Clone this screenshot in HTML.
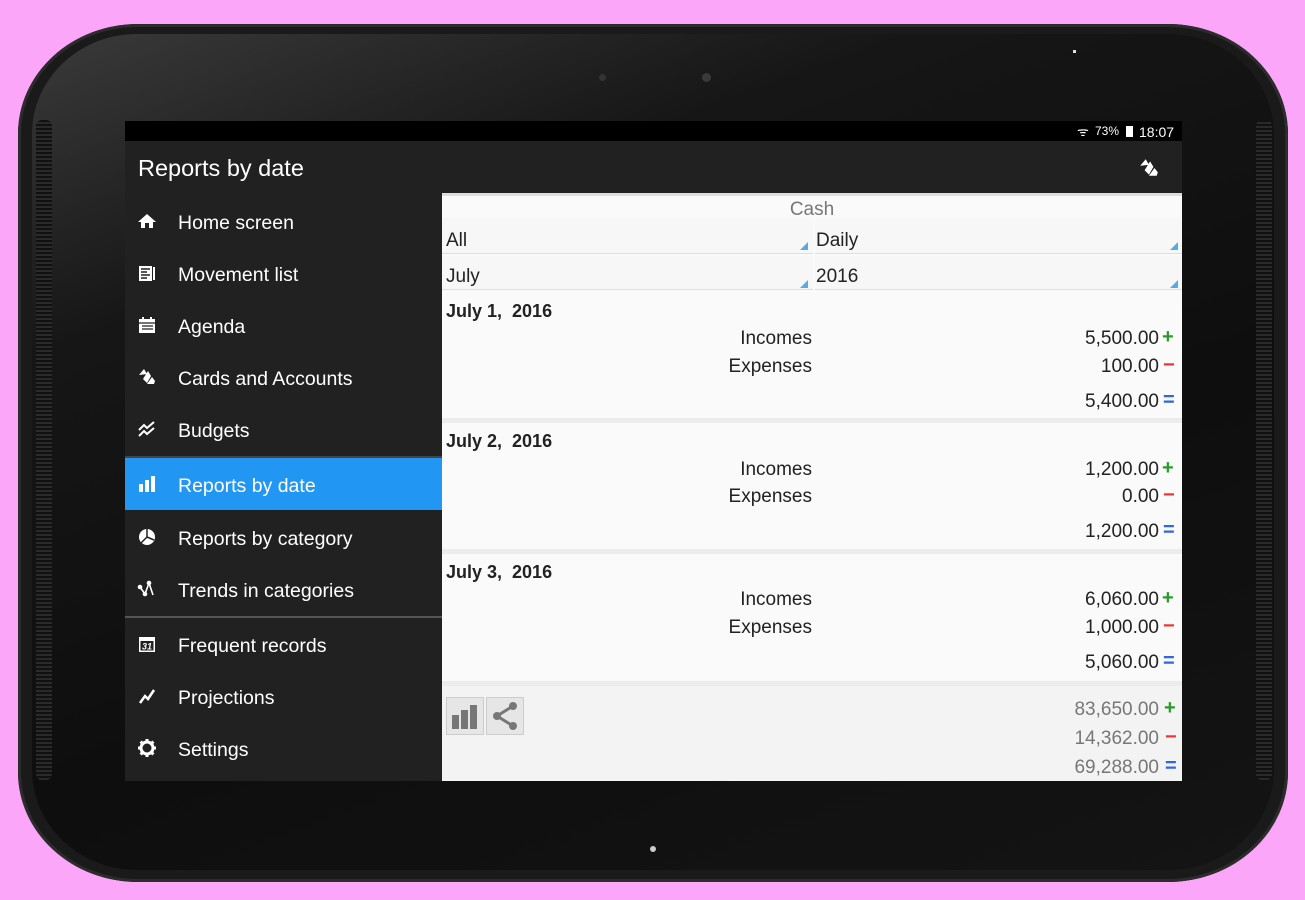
<!DOCTYPE html>
<html><head><meta charset="utf-8"><style>
*{margin:0;padding:0;box-sizing:border-box}
body{width:1305px;height:900px;background:#fba6f8;position:relative;overflow:hidden;font-family:"Liberation Sans","DejaVu Sans",sans-serif}
.a{position:absolute}
.tab{left:18px;top:24px;width:1270px;height:858px;border-radius:120px/110px;background:#1a1a1a;box-shadow:inset 0 0 0 3px #2c2c2c}
.bez{left:32px;top:34px;width:1242px;height:836px;border-radius:105px/100px;background:linear-gradient(160deg,#3a3a3a 0%,#161616 25%,#0e0e0e 60%,#141414 100%)}
.grill{width:16px;height:660px;top:120px;background:repeating-linear-gradient(0deg,#2a2a2a 0 2px,#111 2px 4px);border-radius:6px}
.scr{left:125px;top:121px;width:1057px;height:660px;background:#f7f7f7;overflow:hidden}
.sb{left:0;top:0;width:1057px;height:20px;background:#000;color:#fff;font-size:13px}
.ab{left:0;top:20px;width:1057px;height:52px;background:#212121;color:#fff;font-size:23px}
.dr{left:0;top:72px;width:317px;height:588px;background:#212121;color:#fff;font-size:19.5px}
.it{position:absolute;left:0;width:317px;height:52px}
.it span{position:absolute;left:53px;top:50%;transform:translateY(-40%)}
.it i{position:absolute;left:12px;top:50%;transform:translateY(-50%);width:20px;height:20px;display:block}
.ct{left:317px;top:72px;width:740px;height:588px;background:#fafafa;color:#222;font-size:19px}
.t{position:absolute;white-space:nowrap;line-height:1}
.r{text-align:right}
.sg{position:absolute;font-weight:bold;font-size:20px;line-height:1}
</style></head><body>
<div class="a tab"></div>
<div class="a bez"></div>
<div class="a grill" style="left:36px"></div>
<div class="a grill" style="left:1256px"></div>
<div class="a" style="left:599px;top:74px;width:7px;height:7px;border-radius:50%;background:#333"></div>
<div class="a" style="left:702px;top:73px;width:9px;height:9px;border-radius:50%;background:#3a3a3a"></div>
<div class="a" style="left:1073px;top:50px;width:3px;height:3px;background:#ddd"></div>
<div class="a" style="left:650px;top:846px;width:6px;height:6px;border-radius:50%;background:#ccc"></div>
<div class="a scr">
 <div class="a sb"><span class="t" style="left:952px;top:4px">ᯤ</span><span class="t" style="left:970px;top:4px;font-size:12px">73%</span><span class="a" style="left:1001px;top:5px;width:7px;height:11px;background:#fff"></span><span class="t" style="left:1014px;top:4px;font-size:14px">18:07</span></div>
 <div class="a ab"><span class="t" style="left:13px;top:16px;font-size:23.5px">Reports by date</span>
  <svg class="a" style="left:1013px;top:16px" width="22" height="22" viewBox="0 0 20 20"><path d="M2 8 L7 2 L10 7 Z M6 12 L11 4 L14 9 L10 16 Z M10 17 L15 10 L18 14 L17 17 Z" fill="#fff"/></svg></div>
 <div class="a dr">
  <div class="it" style="top:2px"><i><svg width="20" height="20"><path d="M10 3 L1 11 L4 11 L4 17 L8 17 L8 12 L12 12 L12 17 L16 17 L16 11 L19 11 Z" fill="#fff"/></svg></i><span>Home screen</span></div>
  <div class="it" style="top:54px"><i><svg width="20" height="20"><rect x="2" y="3" width="13" height="15" fill="#fff"/><path d="M4 6h9M4 9h6M4 12h9M4 15h6" stroke="#212121" stroke-width="1.5"/><rect x="16" y="4" width="2" height="13" fill="#fff"/></svg></i><span>Movement list</span></div>
  <div class="it" style="top:106px"><i><svg width="20" height="20"><rect x="2" y="4" width="16" height="14" fill="#fff"/><path d="M2 8h16M5 11h11M5 14h11" stroke="#212121" stroke-width="1.2"/><rect x="5" y="2" width="2" height="4" fill="#fff"/><rect x="13" y="2" width="2" height="4" fill="#fff"/></svg></i><span>Agenda</span></div>
  <div class="it" style="top:158px"><i><svg width="20" height="20" viewBox="0 0 20 20"><path d="M2 8 L7 2 L10 7 Z M6 12 L11 4 L14 9 L10 16 Z M10 17 L15 10 L18 14 L17 17 Z" fill="#fff"/></svg></i><span>Cards and Accounts</span></div>
  <div class="it" style="top:210px"><i><svg width="20" height="20"><path d="M2 11 L7 6 L10 9 L17 3 M2 17 L7 12 L10 15 L17 9" stroke="#fff" stroke-width="2" fill="none"/></svg></i><span>Budgets</span></div>
  <div class="a" style="left:0;top:263px;width:317px;height:2px;background:#444"></div>
  <div class="it" style="top:265px;background:#2196f3;height:52px"><i><svg width="20" height="20"><rect x="2" y="10" width="4" height="8" fill="#fff"/><rect x="8" y="6" width="4" height="12" fill="#fff"/><rect x="14" y="2" width="4" height="16" fill="#fff"/></svg></i><span>Reports by date</span></div>
  <div class="it" style="top:318px"><i><svg width="20" height="20"><circle cx="10" cy="10" r="8" fill="#fff"/><path d="M10 10 L10 2 M10 10 L17 13 M10 10 L4 16" stroke="#212121" stroke-width="1.5"/></svg></i><span>Reports by category</span></div>
  <div class="it" style="top:370px"><i><svg width="20" height="20"><path d="M3 8 L8 15 L12 4 L16 16" stroke="#fff" stroke-width="1.6" fill="none"/><circle cx="3" cy="8" r="2.3" fill="#fff"/><circle cx="8" cy="15" r="2.3" fill="#fff"/><circle cx="12" cy="4" r="2.3" fill="#fff"/></svg></i><span>Trends in categories</span></div>
  <div class="a" style="left:0;top:423px;width:317px;height:2px;background:#555"></div>
  <div class="it" style="top:425px"><i><svg width="20" height="20"><rect x="2" y="3" width="16" height="15" fill="#fff"/><rect x="3.5" y="7" width="13" height="9.5" fill="#212121"/><text x="10" y="15.5" font-size="9" font-weight="bold" fill="#fff" text-anchor="middle" font-family="Liberation Sans">31</text></svg></i><span>Frequent records</span></div>
  <div class="it" style="top:477px"><i><svg width="20" height="20"><path d="M3 17 L8 10 L11 13 L17 4" stroke="#fff" stroke-width="2.5" fill="none"/></svg></i><span>Projections</span></div>
  <div class="it" style="top:529px"><i><svg width="20" height="20"><circle cx="10" cy="10" r="6" fill="none" stroke="#fff" stroke-width="3"/><path d="M10 1v4M10 15v4M1 10h4M15 10h4M3.6 3.6l3 3M13.4 13.4l3 3M3.6 16.4l3-3M13.4 6.6l3-3" stroke="#fff" stroke-width="3"/></svg></i><span>Settings</span></div>
 </div>
 <div class="a ct">
  <div class="a" style="left:0;top:0;width:740px;height:3px;background:#ddd"></div>
  <div class="t" style="left:0;width:740px;text-align:center;top:7px;color:#777;font-size:19px">Cash</div>
  <div class="a" style="left:0;top:25px;width:371px;height:36px;background:#f7f7f7;border-bottom:1px solid #cfe3f5"></div>
  <div class="a" style="left:373px;top:25px;width:367px;height:36px;background:#f7f7f7;border-bottom:1px solid #cfe3f5"></div>
  <div class="a" style="left:0;top:63px;width:371px;height:34px;background:#f7f7f7;border-bottom:1px solid #cfe3f5"></div>
  <div class="a" style="left:373px;top:63px;width:367px;height:34px;background:#f7f7f7;border-bottom:1px solid #cfe3f5"></div>
  <div class="a" style="left:358px;top:49px;width:0;height:0;border-left:8px solid transparent;border-bottom:8px solid #5aa9e6"></div>
  <div class="a" style="left:728px;top:49px;width:0;height:0;border-left:8px solid transparent;border-bottom:8px solid #5aa9e6"></div>
  <div class="a" style="left:358px;top:87px;width:0;height:0;border-left:8px solid transparent;border-bottom:8px solid #5aa9e6"></div>
  <div class="a" style="left:728px;top:87px;width:0;height:0;border-left:8px solid transparent;border-bottom:8px solid #5aa9e6"></div>
  <div class="t" style="left:4px;top:38px">All</div><div class="t" style="left:374px;top:38px">Daily</div>
  <div class="t" style="left:4px;top:74px">July</div><div class="t" style="left:374px;top:74px">2016</div>

  <div class="a" style="left:0;top:225px;width:740px;height:5px;background:#ececec"></div>
  <div class="a" style="left:0;top:356px;width:740px;height:5px;background:#ececec"></div>
  <div class="a" style="left:0;top:488px;width:740px;height:5px;background:#ececec"></div>
  <div class="a" style="left:0;top:493px;width:740px;height:95px;background:#f3f3f3"></div>

  <div class="t" style="left:4px;top:109px;font-weight:bold;font-size:18px">July 1,&nbsp; 2016</div>
  <div class="t r" style="right:370px;top:136px">Incomes</div><div class="t r" style="right:23px;top:136px">5,500.00</div><div class="sg" style="left:720px;top:134px;color:#2a9a2a">+</div>
  <div class="t r" style="right:370px;top:164px">Expenses</div><div class="t r" style="right:23px;top:164px">100.00</div><div class="sg" style="left:721px;top:162px;color:#e33">−</div>
  <div class="t r" style="right:23px;top:199px">5,400.00</div><div class="sg" style="left:721px;top:197px;color:#3366dd">=</div>

  <div class="t" style="left:4px;top:239px;font-weight:bold;font-size:18px">July 2,&nbsp; 2016</div>
  <div class="t r" style="right:370px;top:267px">Incomes</div><div class="t r" style="right:23px;top:267px">1,200.00</div><div class="sg" style="left:720px;top:265px;color:#2a9a2a">+</div>
  <div class="t r" style="right:370px;top:294px">Expenses</div><div class="t r" style="right:23px;top:294px">0.00</div><div class="sg" style="left:721px;top:292px;color:#e33">−</div>
  <div class="t r" style="right:23px;top:329px">1,200.00</div><div class="sg" style="left:721px;top:327px;color:#3366dd">=</div>

  <div class="t" style="left:4px;top:370px;font-weight:bold;font-size:18px">July 3,&nbsp; 2016</div>
  <div class="t r" style="right:370px;top:397px">Incomes</div><div class="t r" style="right:23px;top:397px">6,060.00</div><div class="sg" style="left:720px;top:395px;color:#2a9a2a">+</div>
  <div class="t r" style="right:370px;top:425px">Expenses</div><div class="t r" style="right:23px;top:425px">1,000.00</div><div class="sg" style="left:721px;top:423px;color:#e33">−</div>
  <div class="t r" style="right:23px;top:460px">5,060.00</div><div class="sg" style="left:721px;top:458px;color:#3366dd">=</div>

  <div class="a" style="left:4px;top:504px;width:38px;height:38px;background:#e6e6e6;border:1px solid #ccc"><svg width="36" height="36"><rect x="5" y="17" width="7" height="14" fill="#777"/><rect x="14" y="12" width="7" height="19" fill="#777"/><rect x="23" y="7" width="7" height="24" fill="#777"/></svg></div>
  <div class="a" style="left:44px;top:504px;width:38px;height:38px;background:#e6e6e6;border:1px solid #ccc"><svg width="36" height="36"><path d="M26 8 L10 18 L26 28" stroke="#777" stroke-width="3" fill="none"/><circle cx="26" cy="8" r="4" fill="#777"/><circle cx="10" cy="18" r="4" fill="#777"/><circle cx="26" cy="28" r="4" fill="#777"/></svg></div>
  <div class="t r" style="right:23px;top:507px;color:#777">83,650.00</div><div class="sg" style="left:722px;top:505px;color:#2a9a2a">+</div>
  <div class="t r" style="right:23px;top:536px;color:#777">14,362.00</div><div class="sg" style="left:723px;top:534px;color:#e33">−</div>
  <div class="t r" style="right:23px;top:565px;color:#777">69,288.00</div><div class="sg" style="left:723px;top:563px;color:#3366dd">=</div>
 </div>
</div>
</body></html>
